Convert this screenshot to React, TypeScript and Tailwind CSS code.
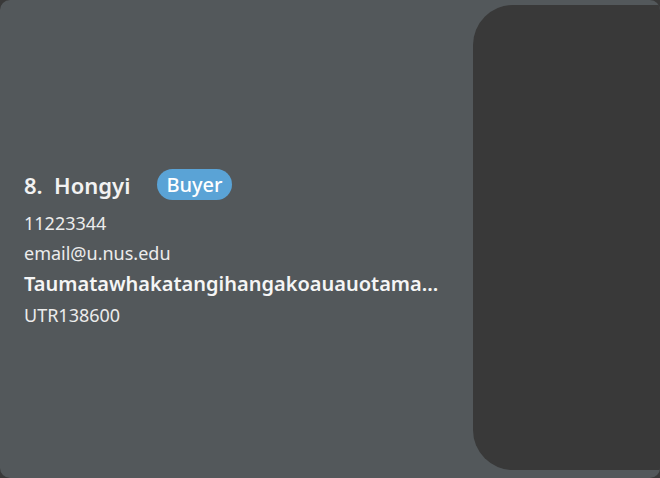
const App = () => {
  return (
    <div className="w-[660px] h-[478px] bg-[#393939] overflow-hidden" style={{ fontFamily: '"Noto Sans", "Open Sans", sans-serif' }}>
      <div className="flex h-full bg-[#53585b] rounded-[10px] overflow-hidden">
        <div className="flex-1 min-w-0 flex flex-col justify-center pl-6 pr-4 pt-[21px]">
          <div className="flex items-center h-[31px]">
            <span className="text-[22px] font-semibold text-[#f2f2f2] leading-none">8.&nbsp;&nbsp;Hongyi</span>
            <span className="ml-[27px] rounded-full bg-[#5aa3d6] px-[9px] h-[31px] flex items-center text-[20px] font-medium text-white">Buyer</span>
          </div>
          <div className="mt-[8px] text-[18px] text-[#ececec] leading-[30px]">11223344</div>
          <div className="text-[18px] text-[#ececec] leading-[30px]">email@u.nus.edu</div>
          <div className="text-[20px] font-semibold text-[#f5f5f5] leading-[32px] whitespace-nowrap">Taumatawhakatangihangakoauauotama...</div>
          <div className="text-[18px] text-[#ececec] leading-[30px]">UTR138600</div>
        </div>
        <div className="w-[187px] shrink-0 mt-[5px] mb-[8px] bg-[#393939] rounded-l-[40px]" />
      </div>
    </div>
  )
}

export default App
